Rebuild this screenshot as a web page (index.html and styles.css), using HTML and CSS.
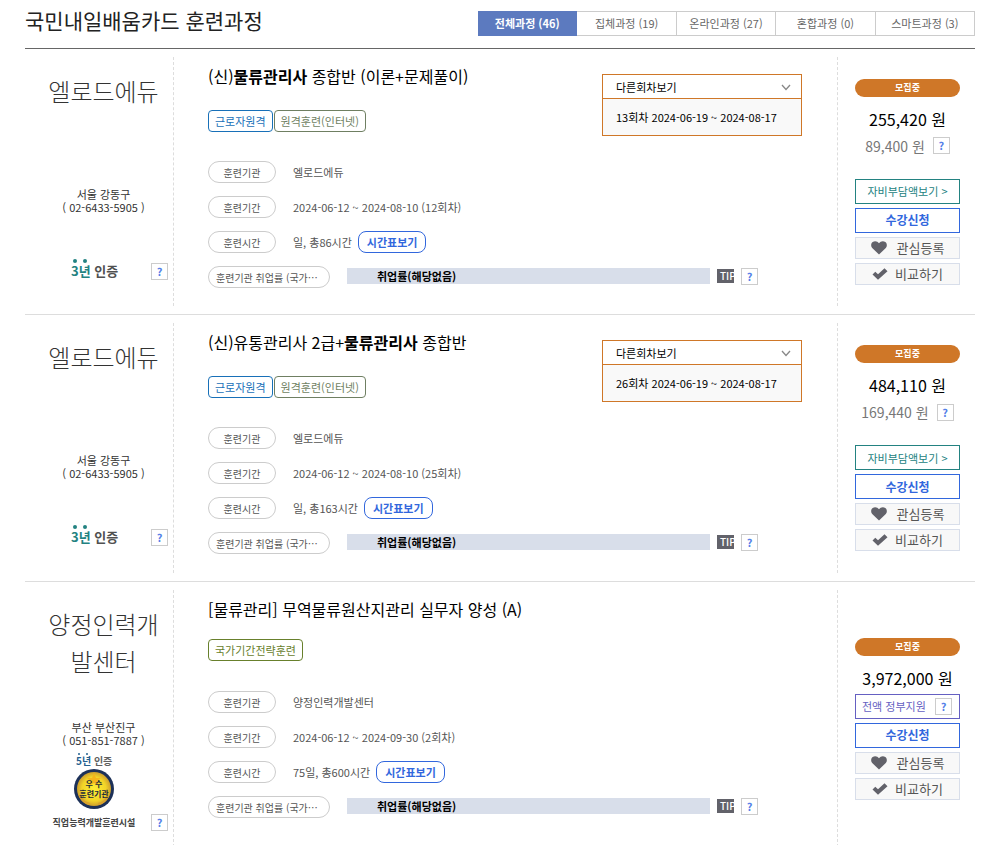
FILE: index.html
```html
<!DOCTYPE html>
<html lang="ko">
<head>
    <meta charset="UTF-8">
    <meta name="viewport" content="width=device-width, initial-scale=1.0">
    <title>국민내일배움카드 훈련과정</title>
    <link rel="stylesheet" href="styles.css">
</head>
<body>
    <!-- 공통 아이콘 -->
    <svg class="sprite" aria-hidden="true">
        <symbol id="icon-heart" viewBox="0 0 16 14">
            <path d="M8 13.5 1.2 6.9C-.5 5 0 2.300 1.700 1.100 3.700-.3 6.500.2 8 2.300 9.500.2 12.300-.3 14.300 1.100 16 2.300 16.500 5 14.800 6.900Z"/>
        </symbol>
        <symbol id="icon-check" viewBox="0 0 16 12">
            <path d="M.5 6.500 3.300 3.700 6 6.200 12.500.3 15.500 3.300 6 11.800Z"/>
        </symbol>
        <symbol id="icon-down" viewBox="0 0 10 7">
            <path d="M1 1l4 4.500L9 1" fill="none" stroke="#888" stroke-width="1.300"/>
        </symbol>
    </svg>

    <div class="container">
        <header class="page-head">
            <h1>국민내일배움카드 훈련과정</h1>
            <nav class="tabs">
                <a href="#" class="on">전체과정 (46)</a>
                <a href="#">집체과정 (19)</a>
                <a href="#">온라인과정 (27)</a>
                <a href="#">혼합과정 (0)</a>
                <a href="#">스마트과정 (3)</a>
            </nav>
        </header>

        <article class="course has-session">
            <div class="provider">
                <h3>엘로드에듀</h3>
                <p class="address">서울 강동구<br>( 02-6433-5905 )</p>
                <div class="cert">
                    <svg width="90" height="60" viewBox="0 0 90 60" role="img" aria-label="3년 인증">
                        <circle cx="26" cy="41" r="2" fill="#238281"/>
                        <circle cx="36" cy="41" r="2" fill="#238281"/>
                        <text x="22" y="56" class="cert-text"><tspan fill="#238281">3년</tspan> 인증</text>
                    </svg>
                    <button type="button" class="help" aria-label="인증 도움말">?</button>
                </div>
            </div>
            <div class="info">
                <div class="info-head">
                    <div>
                        <h2>(신)<b>물류관리사</b> 종합반 (이론+문제풀이)</h2>
                        <div class="tags">
                            <span class="tag blue">근로자원격</span>
                            <span class="tag gray">원격훈련(인터넷)</span>
                        </div>
                    </div>
                    <div class="session">
                        <div class="session-select">
                            <select aria-label="다른회차보기"><option>다른회차보기</option></select>
                            <svg width="10" height="7"><use href="#icon-down"/></svg>
                        </div>
                        <a href="#">13회차 2024-06-19 ~ 2024-08-17</a>
                    </div>
                </div>
                <dl class="detail">
                    <div><dt>훈련기관</dt><dd>엘로드에듀</dd></div>
                    <div><dt>훈련기간</dt><dd>2024-06-12 ~ 2024-08-10 (12회차)</dd></div>
                    <div><dt>훈련시간</dt><dd>일, 총86시간 <button type="button" class="timetable">시간표보기</button></dd></div>
                    <div class="rate"><dt>훈련기관 취업률 (국가…</dt><dd><span class="bar">취업률(해당없음)</span><span class="tip">TIP</span><button type="button" class="help" aria-label="취업률 도움말">?</button></dd></div>
                </dl>
            </div>
            <div class="apply">
                <span class="status">모집중</span>
                <p class="price">255,420 원</p>
                <p class="self-price">89,400 원 <button type="button" class="help" aria-label="자비부담액 도움말">?</button></p>
                <button type="button" class="btn green">자비부담액보기 &gt;</button>
                <button type="button" class="btn primary">수강신청</button>
                <button type="button" class="btn sub"><svg width="16" height="14"><use href="#icon-heart"/></svg>관심등록</button>
                <button type="button" class="btn sub compare"><svg width="16" height="12"><use href="#icon-check"/></svg>비교하기</button>
            </div>
        </article>

        <article class="course has-session">
            <div class="provider">
                <h3>엘로드에듀</h3>
                <p class="address">서울 강동구<br>( 02-6433-5905 )</p>
                <div class="cert">
                    <svg width="90" height="60" viewBox="0 0 90 60" role="img" aria-label="3년 인증">
                        <circle cx="26" cy="41" r="2" fill="#238281"/>
                        <circle cx="36" cy="41" r="2" fill="#238281"/>
                        <text x="22" y="56" class="cert-text"><tspan fill="#238281">3년</tspan> 인증</text>
                    </svg>
                    <button type="button" class="help" aria-label="인증 도움말">?</button>
                </div>
            </div>
            <div class="info">
                <div class="info-head">
                    <div>
                        <h2>(신)유통관리사 2급+<b>물류관리사</b> 종합반</h2>
                        <div class="tags">
                            <span class="tag blue">근로자원격</span>
                            <span class="tag gray">원격훈련(인터넷)</span>
                        </div>
                    </div>
                    <div class="session">
                        <div class="session-select">
                            <select aria-label="다른회차보기"><option>다른회차보기</option></select>
                            <svg width="10" height="7"><use href="#icon-down"/></svg>
                        </div>
                        <a href="#">26회차 2024-06-19 ~ 2024-08-17</a>
                    </div>
                </div>
                <dl class="detail">
                    <div><dt>훈련기관</dt><dd>엘로드에듀</dd></div>
                    <div><dt>훈련기간</dt><dd>2024-06-12 ~ 2024-08-10 (25회차)</dd></div>
                    <div><dt>훈련시간</dt><dd>일, 총163시간 <button type="button" class="timetable">시간표보기</button></dd></div>
                    <div class="rate"><dt>훈련기관 취업률 (국가…</dt><dd><span class="bar">취업률(해당없음)</span><span class="tip">TIP</span><button type="button" class="help" aria-label="취업률 도움말">?</button></dd></div>
                </dl>
            </div>
            <div class="apply">
                <span class="status">모집중</span>
                <p class="price">484,110 원</p>
                <p class="self-price">169,440 원 <button type="button" class="help" aria-label="자비부담액 도움말">?</button></p>
                <button type="button" class="btn green">자비부담액보기 &gt;</button>
                <button type="button" class="btn primary">수강신청</button>
                <button type="button" class="btn sub"><svg width="16" height="14"><use href="#icon-heart"/></svg>관심등록</button>
                <button type="button" class="btn sub compare"><svg width="16" height="12"><use href="#icon-check"/></svg>비교하기</button>
            </div>
        </article>

        <article class="course">
            <div class="provider">
                <h3>양정인력개발센터</h3>
                <p class="address">부산 부산진구<br>( 051-851-7887 )</p>
                <div class="cert">
                    <svg width="90" height="78" viewBox="0 0 90 78" role="img" aria-label="5년 인증 우수훈련기관 직업능력개발훈련시설">
                        <defs>
                            <radialGradient id="gold">
                                <stop offset="0" stop-color="#ffee35"/>
                                <stop offset=".7" stop-color="#f2d428"/>
                                <stop offset="1" stop-color="#cfa02c"/>
                            </radialGradient>
                        </defs>
                        <circle cx="30" cy="1" r="1" fill="#23608f"/>
                        <circle cx="38" cy="1" r="1" fill="#23608f"/>
                        <text x="27" y="12" class="cert-small"><tspan fill="#23608f">5년</tspan> 인증</text>
                        <circle cx="45" cy="36" r="20" fill="#1d3158"/>
                        <circle cx="45" cy="36" r="17" fill="url(#gold)"/>
                        <path d="M45 20l2 5 5 0-4 3 2 5-5-3-5 3 2-5-4-3 5 0Z" fill="#f5b51c"/>
                        <path d="M31 43q3 7 10 8M59 43q-3 7-10 8" fill="none" stroke="#d9a22a" stroke-width="2"/>
                        <text x="45" y="34" class="medal-text">우 수</text>
                        <text x="45" y="44" class="medal-text">훈련기관</text>
                        <text x="45" y="73" class="cert-label">직업능력개발훈련시설</text>
                    </svg>
                    <button type="button" class="help" aria-label="인증 도움말">?</button>
                </div>
            </div>
            <div class="info">
                <div class="info-head">
                    <div>
                        <h2>[물류관리] 무역물류원산지관리 실무자 양성 (A)</h2>
                        <div class="tags">
                            <span class="tag olive">국가기간전략훈련</span>
                        </div>
                    </div>
                </div>
                <dl class="detail">
                    <div><dt>훈련기관</dt><dd>양정인력개발센터</dd></div>
                    <div><dt>훈련기간</dt><dd>2024-06-12 ~ 2024-09-30 (2회차)</dd></div>
                    <div><dt>훈련시간</dt><dd>75일, 총600시간 <button type="button" class="timetable">시간표보기</button></dd></div>
                    <div class="rate"><dt>훈련기관 취업률 (국가…</dt><dd><span class="bar">취업률(해당없음)</span><span class="tip">TIP</span><button type="button" class="help" aria-label="취업률 도움말">?</button></dd></div>
                </dl>
            </div>
            <div class="apply">
                <span class="status">모집중</span>
                <p class="price">3,972,000 원</p>
                <div class="btn support">전액 정부지원 <button type="button" class="help" aria-label="정부지원 도움말">?</button></div>
                <button type="button" class="btn primary">수강신청</button>
                <button type="button" class="btn sub"><svg width="16" height="14"><use href="#icon-heart"/></svg>관심등록</button>
                <button type="button" class="btn sub compare"><svg width="16" height="12"><use href="#icon-check"/></svg>비교하기</button>
            </div>
        </article>
    </div>
</body>
</html>
```
FILE: styles.css
```css
* {
    box-sizing: border-box;
}
body {
    margin: 0;
    font-family: "Noto Sans CJK KR", sans-serif;
    font-size: 11px;
    line-height: 16px;
    color: #555;
    background-color: #fff;
}
h1, h2, h3, p, dl, dd {
    margin: 0;
}
button, select {
    font-family: inherit;
    font-size: inherit;
    line-height: inherit;
    padding: 0;
    cursor: pointer;
}
a {
    color: inherit;
    text-decoration: none;
}
.sprite {
    display: none;
}
.container {
    padding: 0 23px 0 25px;
}

/* 상단 제목, 탭 */
.page-head {
    display: flex;
    justify-content: space-between;
    align-items: flex-start;
    height: 49px;
    padding-top: 5px;
    border-bottom: 1px solid #666;
}
.page-head h1 {
    font-size: 21px;
    line-height: 30px;
    font-weight: 400;
    color: #222;
}
.tabs {
    display: flex;
    width: 497px;
    margin-top: 6px;
}
.tabs a {
    flex: 1;
    height: 25px;
    line-height: 23px;
    text-align: center;
    color: #666;
    border: 1px solid #ccc;
    border-left: 0;
}
.tabs a.on {
    font-weight: bold;
    color: #fff;
    background-color: #5c7abf;
    border-color: #5c7abf;
}

/* 과정 목록 */
.course {
    display: grid;
    grid-template-columns: 149px 1fr 138px;
    min-height: 267px;
    padding: 8px 0;
    border-bottom: 1px solid #ddd;
}
.course:first-of-type {
    min-height: 266px;
}
.provider {
    display: flex;
    flex-direction: column;
    padding: 15px 5px 16px 22px;
    border-right: 1px dashed #ddd;
}
.provider h3 {
    min-height: 116px;
    padding-right: 8px;
    font-size: 24px;
    line-height: 37px;
    font-weight: 300;
    text-align: center;
    color: #333;
    word-break: break-all;
}
.address {
    padding-right: 8px;
    line-height: 13px;
    text-align: center;
    color: #333;
}
.cert {
    display: flex;
    justify-content: space-between;
    align-items: flex-end;
    margin-top: 6px;
    padding-left: 2px;
}
.cert-text {
    font-size: 13px;
    font-weight: bold;
    fill: #505050;
}
.cert-small {
    font-size: 10px;
    font-weight: bold;
    fill: #606060;
}
.cert-label {
    font-size: 9px;
    font-weight: bold;
    fill: #444;
    text-anchor: middle;
}
.medal-text {
    font-size: 8px;
    font-weight: bold;
    fill: #1d2b3a;
    text-anchor: middle;
}
.help {
    flex: none;
    width: 17px;
    height: 17px;
    font-size: 11px;
    line-height: 15px;
    font-weight: bold;
    text-align: center;
    color: #5580e8;
    background-color: #fff;
    border: 1px solid #ccc;
}

.info {
    padding: 7px 35px 0 34px;
}
.info-head {
    display: flex;
    justify-content: space-between;
}
.info h2 {
    font-size: 16px;
    line-height: 24px;
    font-weight: normal;
    color: #000;
}
.tags {
    display: flex;
    gap: 1px;
    margin-top: 18px;
}
.has-session .tags {
    margin-top: 22px;
}
.tag {
    height: 22px;
    padding: 0 6px;
    line-height: 20px;
    border: 1px solid;
    border-radius: 4px;
}
.tag.blue {
    color: #1870b8;
}
.tag.gray {
    color: #6f7f62;
}
.tag.olive {
    color: #68802c;
}
.session {
    width: 200px;
    margin-top: 10px;
    color: #000;
    border: 1px solid #cf7728;
}
.session-select {
    position: relative;
}
.session-select select {
    display: block;
    width: 100%;
    height: 24px;
    padding: 0 13px;
    color: #000;
    background-color: #fff;
    border: 0;
    border-bottom: 1px solid #cf7728;
    border-radius: 0;
    appearance: none;
}
.session-select svg {
    position: absolute;
    top: 9px;
    right: 10px;
    pointer-events: none;
}
.session a {
    display: block;
    padding: 10px 13px;
    background-color: #f9f9f9;
}

.detail {
    display: flex;
    flex-direction: column;
    gap: 13px;
    margin-top: 30px;
}
.has-session .detail {
    margin-top: 25px;
}
.detail div {
    display: flex;
    gap: 17px;
}
.detail dt {
    width: 68px;
    height: 22px;
    font-size: 10px;
    line-height: 21px;
    text-align: center;
    border: 1px solid #ccc;
    border-radius: 11px;
}
.detail dd {
    display: flex;
    align-items: center;
    gap: 6px;
}
.timetable {
    height: 22px;
    padding: 0 8px;
    line-height: 20px;
    font-weight: bold;
    color: #3267dd;
    background-color: #fff;
    border: 1px solid #3267dd;
    border-radius: 8px;
}
.detail .rate {
    padding-right: 44px;
}
.rate dt {
    width: 122px;
    padding-left: 7px;
    text-align: left;
    white-space: nowrap;
}
.rate dd {
    flex: 1;
    gap: 7px;
    height: 20px;
}
.bar {
    flex: 1;
    height: 16px;
    padding-left: 30px;
    font-weight: bold;
    color: #000;
    background-color: #d8deea;
}
.tip {
    width: 17px;
    height: 14px;
    padding-left: 3px;
    overflow: hidden;
    font-size: 10px;
    line-height: 14px;
    font-weight: 500;
    color: #fff;
    background-color: #62626a;
}

/* 신청 영역 */
.apply {
    display: flex;
    flex-direction: column;
    justify-content: center;
    gap: 4px;
    padding: 0 15px 0 17px;
    border-left: 1px dashed #ddd;
}
.status {
    height: 18px;
    margin-bottom: 6px;
    font-size: 9px;
    line-height: 18px;
    font-weight: bold;
    text-align: center;
    color: #fff;
    background-color: #cf7728;
    border-radius: 9px;
}
.price {
    font-size: 16px;
    line-height: 24px;
    text-align: center;
    color: #000;
}
.self-price {
    display: flex;
    justify-content: center;
    align-items: center;
    gap: 8px;
    margin-bottom: 18px;
    font-size: 14px;
    line-height: 22px;
    color: #777;
}
.btn {
    display: flex;
    justify-content: center;
    align-items: center;
    height: 25px;
    background-color: #fff;
    border: 1px solid;
}
.btn.green {
    color: #238281;
    border-color: #238281;
}
.btn.primary {
    font-size: 12px;
    font-weight: bold;
    color: #3267dd;
    border-color: #3267dd;
}
.btn.sub {
    gap: 10px;
    height: 22px;
    font-size: 13px;
    color: #555;
    background-color: #f8f8f8;
    border-color: #d8deea;
}
.btn.compare {
    gap: 7px;
}
.btn.sub svg {
    fill: #62626a;
}
.btn.support {
    justify-content: space-between;
    padding: 0 7px 0 6px;
    color: #6560c2;
    border-color: #6560c2;
}
```
